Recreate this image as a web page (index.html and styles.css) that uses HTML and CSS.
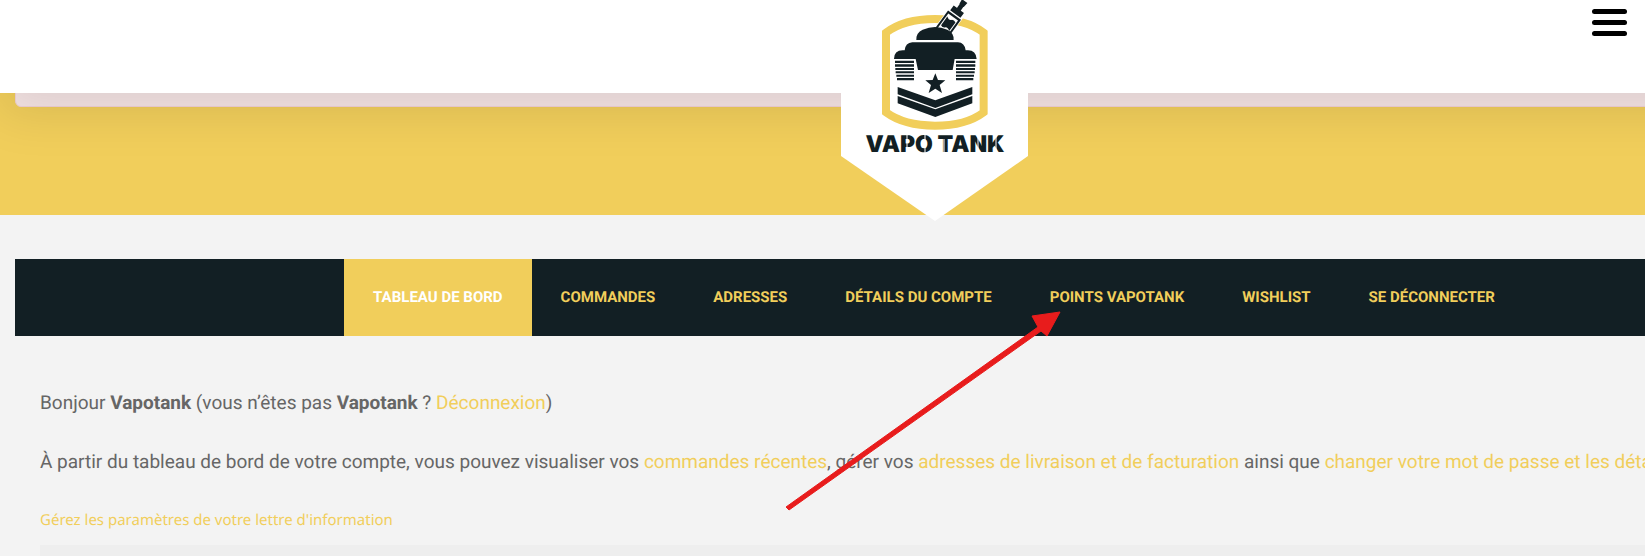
FILE: index.html
```html
<!DOCTYPE html>
<html lang="fr">
<head>
    <meta charset="UTF-8">
    <title>Mon compte - Vapo Tank</title>
    <link rel="stylesheet" href="styles.css">
</head>
<body>
    <div class="page">
        <header class="header">
            <a href="#" class="logo" aria-label="Vapo Tank">
                <svg width="187" height="221" viewBox="0 0 187 221">
                    <path fill="#fff" d="M0 0H187V156L94 221L0 156Z"/>
                    <g transform="scale(.3333) translate(-33 0)" fill="#121f24">
                        <path fill="none" stroke="#f1ce5b" stroke-width="24" d="M168 98Q222 57 315 57T461 98V337Q408 377 315 377T168 337Z"/>
                        <!-- vapoteuse -->
                        <g transform="translate(403 5) rotate(36)">
                            <path fill="#fff" d="M-26 28H26V132H-26Z"/>
                            <path d="M-10 -2H10L8 14H-8ZM-7 14H7V30H-7ZM-19 28H19V46H-19ZM-24 50H24V116H-24Z"/>
                            <path fill="#fff" d="M-18 57H18V112H-18Z"/>
                            <path d="M-15 66Q-4 74 2 66Q8 62 15 66V98Q4 90 -2 97Q-8 102 -15 98Z"/>
                        </g>
                        <!-- char -->
                        <path d="M259 120Q258 98 278 89Q297 81 315 81Q334 81 352 89Q372 98 371 120Z"/>
                        <path d="M247 127H384Q404 128 407 151Q438 147 440 177H374L368 210H264L257 177H192Q192 148 224 151Q226 129 247 127Z"/>
                        <path d="M195 182H252V189H195ZM195 193H252V200H195ZM196 204H252V210H196ZM197 214H252V220H197ZM199 224H252V230H199ZM201 234H252V241H201Z"/>
                        <path d="M378 182H436V189H378ZM378 193H436V200H378ZM378 204H435V210H378ZM378 214H434V220H378ZM378 224H432V230H378ZM378 234H430V241H378Z"/>
                        <path d="M316 220L324 240L346 241L329 255L336 279L316 266L296 279L303 255L286 241L308 240Z"/>
                        <path d="M203 261L316 301L427 261V283L316 324L203 283ZM203 288L316 328L427 288V310L316 351L203 310Z"/>
                    </g>
                    <text class="logo-text" x="94" y="152" text-anchor="middle">VAPO TANK</text>
                    <path stroke="#fff" fill="none" d="M66 135V153M84 134V153M103 139V153M137 134V153M155 134V153"/>
                </svg>
            </a>
            <button class="menu-btn" aria-label="Menu">
                <span></span>
                <span></span>
                <span></span>
            </button>
        </header>

        <div class="banner">
            <div class="notice"></div>
        </div>

        <main class="account">
            <nav class="account-nav">
                <a href="#" class="active">Tableau de bord</a>
                <a href="#">Commandes</a>
                <a href="#">Adresses</a>
                <a href="#">Détails du compte</a>
                <a href="#">Points Vapotank</a>
                <a href="#">Wishlist</a>
                <a href="#">Se déconnecter</a>
            </nav>

            <div class="account-content">
                <p>Bonjour <strong>Vapotank</strong> (vous n’êtes pas <strong>Vapotank</strong> ? <a href="#">Déconnexion</a>)</p>
                <p>À partir du tableau de bord de votre compte, vous pouvez visualiser vos <a href="#">commandes récentes</a>, gérer vos <a href="#">adresses de livraison et de facturation</a> ainsi que <a href="#">changer votre mot de passe et les détails</a></p>
                <a href="#" class="newsletter">Gérez les paramètres de votre lettre d'information</a>
                <div class="panel"></div>
            </div>
        </main>

        <svg class="arrow" width="276" height="202" viewBox="0 0 276 202">
            <path fill="#e81c1c" d="M1 196L253 16L247 5L275 1L262 25L256 20L4 199Z" stroke="#e81c1c"/>
        </svg>
    </div>
</body>
</html>
```
FILE: styles.css
```css
* {
    box-sizing: border-box;
}

body {
    font-family: Roboto, sans-serif;
    background-color: #f3f3f3;
    color: #666;
    margin: 0;
    overflow: hidden;
    text-rendering: geometricPrecision;
}

a {
    color: #f1ce5b;
    text-decoration: none;
}

/* wider than the window, runs off the right side */
.page {
    position: relative;
    width: calc(100% + 223px);
}

/* Header */
.header {
    position: absolute;
    top: 0;
    left: 0;
    right: 0;
    z-index: 10;
    display: flex;
    justify-content: center;
    height: 93px;
    background-color: #fff;
    box-shadow: 0 20px 50px rgba(0, 0, 0, 0.1);
}

.logo svg {
    display: block;
}

.logo-text {
    font-family: Inter, sans-serif;
    font-size: 23px;
    font-weight: 900;
    fill: #121f24;
}

.menu-btn {
    position: absolute;
    top: 9px;
    right: 241px;
    display: flex;
    flex-direction: column;
    gap: 6px;
    width: 35px;
    padding: 0;
    background: none;
    border: none;
    cursor: pointer;
}

.menu-btn span {
    width: 100%;
    height: 5px;
    border-radius: 3px;
    background-color: #000;
}

/* Banner */
.banner {
    padding: 0 15px 108px;
    background-color: #f1ce5b;
}

.notice {
    height: 107px;
    background-color: #f7e6e6;
    border: 1px solid #f3d3d7;
    border-radius: 6px;
}

/* Account */
.account {
    padding: 44px 15px 0;
}

.account-nav {
    display: flex;
    justify-content: center;
    background-color: #121f24;
}

.account-nav a {
    padding: 0 29px;
    font-size: 15px;
    font-weight: bold;
    line-height: 77px;
    text-transform: uppercase;
}

.account-nav a.active {
    background-color: #f1ce5b;
    color: #fff;
}

.account-content {
    padding: 50px 25px 0;
}

.account-content p {
    margin: 0 0 25px;
    font-size: 19px;
    line-height: 34px;
    white-space: nowrap;
}

.newsletter {
    display: block;
    font-family: "Noto Sans", sans-serif;
    font-size: 15px;
    line-height: 32px;
}

.panel {
    height: 40px;
    margin-top: 9px;
    background-color: #eee;
}

.arrow {
    position: absolute;
    top: 311px;
    left: 785px;
    z-index: 20;
}
```
